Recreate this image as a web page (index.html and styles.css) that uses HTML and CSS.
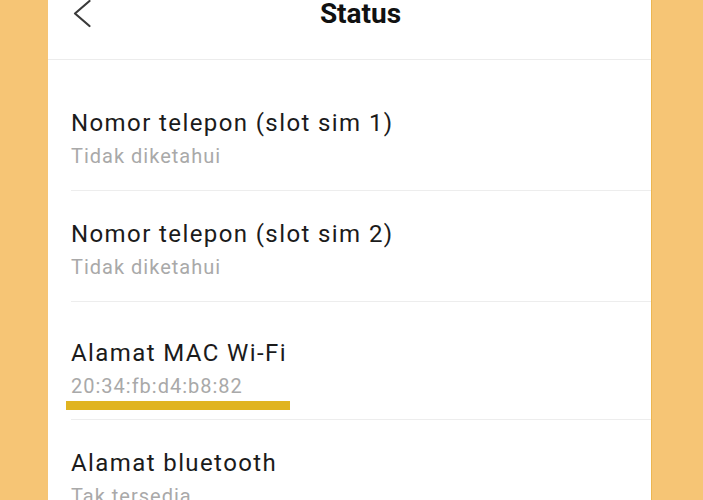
FILE: index.html
```html
<!DOCTYPE html>
<html lang="id">
<head>
    <meta charset="UTF-8">
    <meta name="viewport" content="width=device-width, initial-scale=1.0">
    <title>Status</title>
    <link rel="stylesheet" href="styles.css">
</head>
<body>
    <div class="screen">
        <div class="topbar">
            <svg class="back" width="18" height="28" viewBox="0 0 18 28">
                <path d="M16.5 1 L2 13.5 L16.5 26" fill="none" stroke="#3a3a3a" stroke-width="2.2" stroke-linecap="round" stroke-linejoin="round"/>
            </svg>
            <h1 class="title">Status</h1>
        </div>

        <div class="list">
            <div class="row">
                <div class="row-label">Nomor telepon (slot sim 1)</div>
                <div class="row-value">Tidak diketahui</div>
            </div>
            <div class="row">
                <div class="row-label">Nomor telepon (slot sim 2)</div>
                <div class="row-value">Tidak diketahui</div>
            </div>
            <div class="row marked">
                <div class="row-label">Alamat MAC Wi-Fi</div>
                <div class="row-value">20:34:fb:d4:b8:82</div>
                <span class="highlight"></span>
            </div>
            <div class="row">
                <div class="row-label">Alamat bluetooth</div>
                <div class="row-value">Tak tersedia</div>
            </div>
        </div>
    </div>
</body>
</html>
```

FILE: styles.css
```css
body {
    margin: 0;
    background-color: #f6c575;
    font-family: Roboto, 'Noto Sans', 'Liberation Sans', sans-serif;
    height: 500px;
    overflow: hidden;
}

.screen {
    background-color: #ffffff;
    margin: 0 52px 0 48px;
    height: 500px;
    overflow: hidden;
    box-shadow: 1px 0 0 #ecb651;
}

.topbar {
    display: flex;
    align-items: flex-start;
    height: 59px;
    padding-left: 25px;
    border-bottom: 1px solid #ececec;
}

.back {
    display: block;
    flex-shrink: 0;
}

.title {
    flex: 1;
    margin: 0;
    padding-right: 21px;
    text-align: center;
    font-size: 28px;
    line-height: 28px;
    font-weight: bold;
    color: #111;
}

.list {
    padding-top: 20px;
}

.row {
    position: relative;
    padding: 29px 0 22px;
    margin-left: 23px;
    border-bottom: 1px solid #ededed;
}

.row.marked {
    padding-top: 37px;
    padding-bottom: 21px;
}

.row-label {
    font-size: 24px;
    line-height: 28px;
    letter-spacing: 1.4px;
    color: #1b1b1b;
}

.row-value {
    margin-top: 7px;
    font-size: 20px;
    line-height: 24px;
    letter-spacing: 1px;
    color: #a9a9a9;
}

.highlight {
    position: absolute;
    left: -5px;
    top: 99px;
    width: 224px;
    height: 9px;
    background-color: #e0b421;
}
```
